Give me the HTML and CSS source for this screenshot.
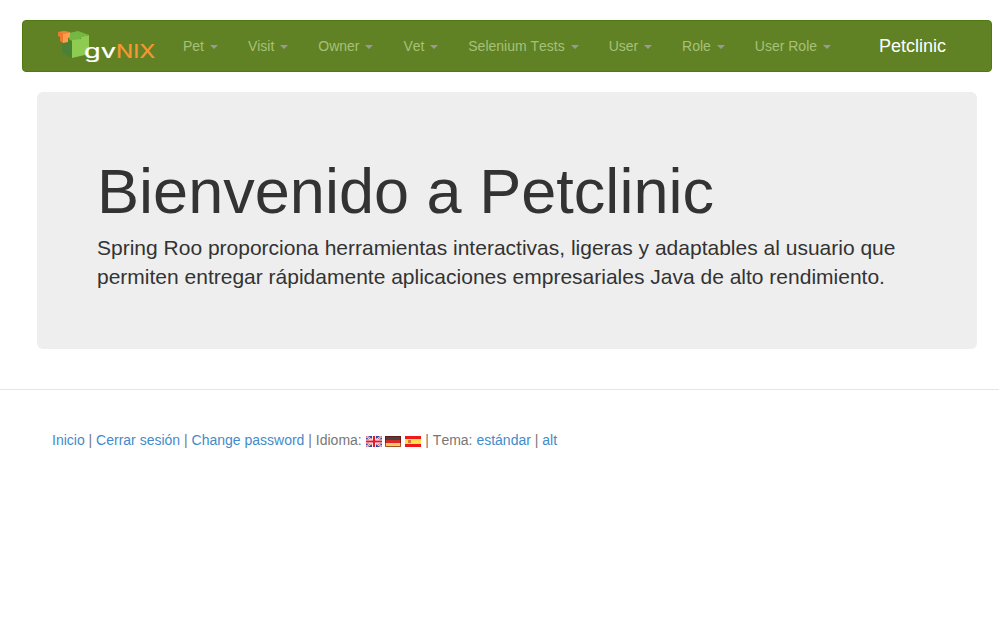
FILE: index.html
```html
<!DOCTYPE html>
<html lang="es">
<head>
<meta charset="utf-8">
<title>Petclinic</title>
<link rel="stylesheet" href="styles.css">
</head>
<body>
<nav class="navbar">
  <a class="logo" href="#" aria-label="gvNIX">
    <svg width="100" height="36" viewBox="0 0 100 36">
      <path fill="#4c8035" d="M6 12l10 1v17l-5-2-5-4z"/>
      <path fill="#74b743" d="M13 5l9-2 11 4-8 2-1 3-8 1-3-2z"/>
      <path fill="#8dcc50" d="M16 12l9-1V9l8-2v19l-17 4z"/>
      <path fill="#ec7932" d="M2 4l5 2v9l-3-2V9L2 8z"/>
      <path fill="#ff9d4c" d="M7 6l7-2v5l-2 1v4l-5 1z"/>
      <path fill="#f48736" d="M2 4l6-1 6 1-7 2z"/>
      <text class="logo-gv" x="28" y="30" textLength="32" lengthAdjust="spacingAndGlyphs">gv</text>
      <text class="logo-nix" x="60" y="30" textLength="39" lengthAdjust="spacingAndGlyphs">NIX</text>
    </svg>
  </a>
  <ul class="menu">
    <li><a href="#">Pet <b class="caret"></b></a></li>
    <li><a href="#">Visit <b class="caret"></b></a></li>
    <li><a href="#">Owner <b class="caret"></b></a></li>
    <li><a href="#">Vet <b class="caret"></b></a></li>
    <li><a href="#">Selenium Tests <b class="caret"></b></a></li>
    <li><a href="#">User <b class="caret"></b></a></li>
    <li><a href="#">Role <b class="caret"></b></a></li>
    <li><a href="#">User Role <b class="caret"></b></a></li>
  </ul>
  <a class="brand" href="#">Petclinic</a>
</nav>
<main class="jumbotron">
  <h1>Bienvenido a Petclinic</h1>
  <p>Spring Roo proporciona herramientas interactivas, ligeras y adaptables al usuario que permiten entregar rápidamente aplicaciones empresariales Java de alto rendimiento.</p>
</main>
<footer class="footer">
  <a href="#">Inicio</a> | <a href="#">Cerrar sesión</a> | <a href="#">Change password</a> | Idioma:
  <svg class="flag" width="16" height="11" viewBox="0 0 16 11"><path fill="#2f4a9e" d="M0 0h16v11H0z"/><path stroke="#fff" stroke-width="2" d="M0 0l16 11M16 0L0 11"/><path stroke="#e03040" stroke-width=".8" d="M0 0l16 11M16 0L0 11"/><path stroke="#fff" stroke-width="4" d="M8 0v11M0 5.5h16"/><path stroke="#e8182c" stroke-width="2.2" d="M8 0v11M0 5.5h16"/></svg>
  <svg class="flag flag-de" width="16" height="11" viewBox="0 0 16 11"><path fill="#444" d="M0 0h16v4H0z"/><path fill="#d82828" d="M0 4h16v3H0z"/><path fill="#f6c860" d="M0 7h16v4H0z"/><path fill="none" stroke="#700" stroke-opacity=".6" d="M.5.5h15v10H.5z"/></svg>
  <svg class="flag" width="16" height="11" viewBox="0 0 16 11"><path fill="#f01818" d="M0 0h16v11H0z"/><path fill="#ffe04a" d="M0 3h16v5H0z"/><path fill="#d87838" d="M3 4h3v3H3z"/></svg>
  | Tema: <a href="#">estándar</a> | <a href="#">alt</a>
</footer>
</body>
</html>
```
FILE: styles.css
```css
* { box-sizing: border-box; }
body {
  margin: 0;
  padding-top: 20px;
  background: #fff;
  color: #777;
  font: 14px/20px "Liberation Sans", Arial, sans-serif;
}
a { color: #428bca; text-decoration: none; }
.navbar {
  display: flex;
  width: 970px;
  height: 52px;
  margin-left: 22px;
  padding-left: 33px;
  border: 1px solid #507a0f;
  border-radius: 4px;
  background: #608224;
  font-kerning: none;
}
.logo { width: 112px; padding-top: 7px; }
.logo svg { display: block; }
.logo text { font-family: Inter, sans-serif; font-size: 19px; stroke-width: 0.2px; }
.logo-gv { fill: #fff; stroke: #fff; }
.logo-nix { fill: #f79633; stroke: #f79633; }
.menu { display: flex; margin: 0; padding: 0; list-style: none; }
.menu a { display: block; padding: 15px; color: #a6c178; }
.caret {
  display: inline-block;
  margin-left: 2px;
  vertical-align: middle;
  border-top: 4px solid #999;
  border-right: 4px solid transparent;
  border-left: 4px solid transparent;
}
.brand { margin-left: 33px; padding: 15px 0; color: #fff; font-size: 18px; }
.jumbotron {
  width: 940px;
  height: 257px;
  margin: 20px 0 0 37px;
  padding: 68px 60px 0;
  border-radius: 6px;
  background: #eee;
  color: #333;
}
h1 { margin: 0 0 10px; font-size: 63px; font-weight: 500; line-height: 63px; letter-spacing: 0.03px; }
.jumbotron p { margin: 0; font-size: 21px; line-height: 29px; }
.footer {
  margin-top: 40px;
  padding: 40px 52px;
  border-top: 1px solid #e5e5e5;
  font-kerning: none;
}
.flag { vertical-align: -2px; }
.flag-de { margin: 0 0.5px 0 -0.5px; }
```
